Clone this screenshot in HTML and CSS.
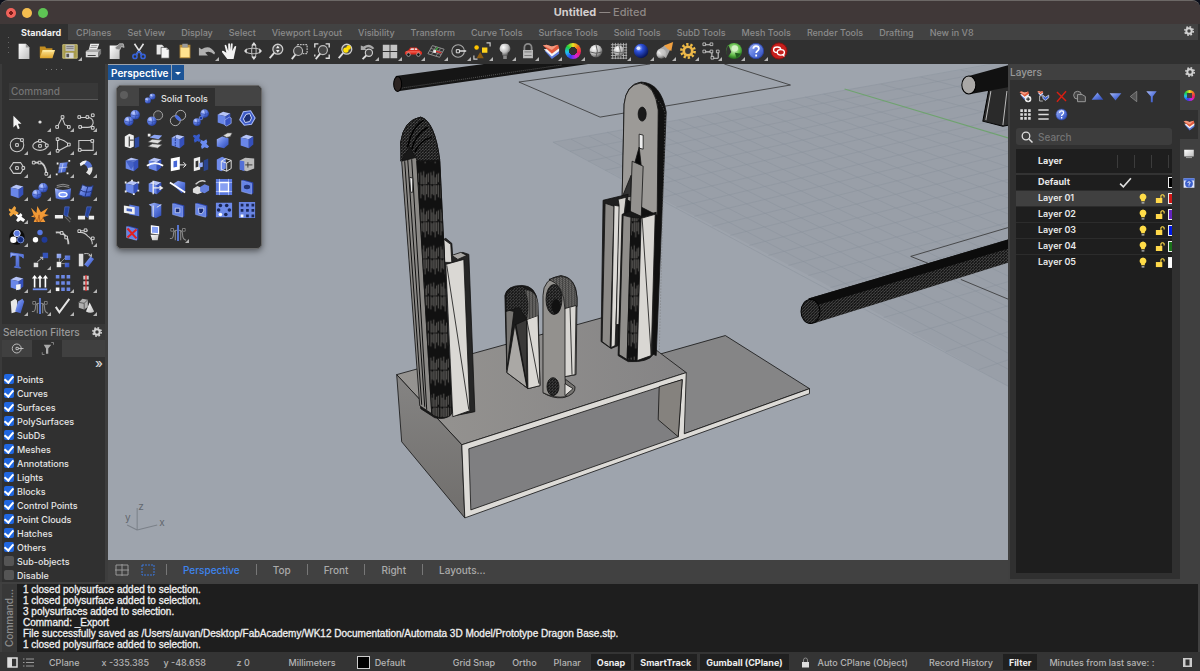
FILE: index.html
```html
<!DOCTYPE html>
<html lang="en">
<head>
<meta charset="utf-8">
<title>Untitled — Edited</title>
<link rel="stylesheet" href="styles.css">
</head>
<body>
<svg class="defs" aria-hidden="true">
  <defs>
    <linearGradient id="blue" x1="0" y1="0" x2="1" y2="1"><stop offset="0" stop-color="#a9baf5"/><stop offset=".5" stop-color="#5d7be0"/><stop offset="1" stop-color="#2c48b4"/></linearGradient>
    <radialGradient id="ball" cx=".35" cy=".3" r=".75"><stop offset="0" stop-color="#c5d2ff"/><stop offset=".5" stop-color="#5f7ee6"/><stop offset="1" stop-color="#203a9c"/></radialGradient>
    <radialGradient id="deep" cx=".35" cy=".3" r=".75"><stop offset="0" stop-color="#b8ccff"/><stop offset=".35" stop-color="#2d50d8"/><stop offset="1" stop-color="#04104e"/></radialGradient>
    <radialGradient id="grayball" cx=".35" cy=".3" r=".75"><stop offset="0" stop-color="#fff"/><stop offset=".6" stop-color="#bbb"/><stop offset="1" stop-color="#555"/></radialGradient>
    <radialGradient id="greenball" cx=".5" cy=".4" r=".6"><stop offset="0" stop-color="#e4f8d8"/><stop offset=".6" stop-color="#62bd4a"/><stop offset="1" stop-color="#1e641a"/></radialGradient>
    <linearGradient id="paper" x1="0" y1="0" x2="1" y2="1"><stop offset="0" stop-color="#fff"/><stop offset="1" stop-color="#bdbdbd"/></linearGradient>
    <linearGradient id="gold" x1="0" y1="0" x2="0" y2="1"><stop offset="0" stop-color="#ffe693"/><stop offset="1" stop-color="#e0a52a"/></linearGradient>
    <linearGradient id="face" x1="0" y1="0" x2="1" y2="0"><stop offset="0" stop-color="#969491"/><stop offset="1" stop-color="#858485"/></linearGradient>
    <linearGradient id="side" x1="0" y1="0" x2="0" y2="1"><stop offset="0" stop-color="#858483"/><stop offset="1" stop-color="#706e6c"/></linearGradient>
    <pattern id="mesh" width="10" height="37" patternUnits="userSpaceOnUse"><rect width="10" height="37" fill="#111"/><path d="M1 0v14M1 25v12M2.500 2v8M2.500 28v9M4 0v11M4 24v13M5.500 0v16M5.500 30v7M7 1v9M7 27v10M8.500 0v13M8.500 26v9" stroke="#8a8885" stroke-width=".6"/><path d="M0 0h10" stroke="#000"/></pattern>
    <pattern id="weave" width="3" height="3" patternUnits="userSpaceOnUse"><rect width="3" height="3" fill="#161616"/><path d="M0 3L3 0M0 0l1 1" stroke="#6c6c6c" stroke-width=".5"/></pattern>
    <pattern id="ridge" width="3" height="2" patternUnits="userSpaceOnUse"><rect width="3" height="2" fill="#b3b1ae"/><path d="M0 .5h2M1.500 1.500h2" stroke="#111" stroke-width=".9"/></pattern>
    <symbol id="cube" viewBox="0 0 20 20"><path d="M3 6l6-3 8 2-5 3z" fill="#b6c4f7"/><path d="M3 6l9 2v10l-9-3z" fill="#6a87e8"/><path d="M12 8l5-3v9l-5 4z" fill="#3550bb"/></symbol>
    <symbol id="slab" viewBox="0 0 20 20"><path d="M4 3l2-1 11 3v12l-2 1z" fill="#2c46ae"/><path d="M4 3l11 3v12L4 15z" fill="#6583e6" stroke="#9fb1f2" stroke-width=".6"/></symbol>
    <symbol id="sphere" viewBox="0 0 10 10"><circle cx="5" cy="5" r="4.800" fill="url(#ball)"/><path d="M.5 5q4.500 2 9 0M5 .3q2 4.700 0 9.400" fill="none" stroke="#2a429f" stroke-width=".6"/></symbol>
    <symbol id="glass" viewBox="0 0 20 20"><circle cx="12" cy="8" r="5.500" fill="#4a4a4a" stroke="#ccc" stroke-width="1.400"/><path d="M8 12l-5 6" stroke="#ddd" stroke-width="2"/></symbol>
    <symbol id="gear" viewBox="0 0 12 12"><circle cx="6" cy="6" r="2.700" fill="none" stroke="#d2d2d2" stroke-width="2"/><circle cx="6" cy="6" r="4.200" fill="none" stroke="#d2d2d2" stroke-width="1.600" stroke-dasharray="1.700 1.599"/></symbol>
    <symbol id="layers" viewBox="0 0 20 20"><path d="M3 10l8 9 8-6v-3z" fill="#5c79d8"/><path d="M2 8l9 8 8-6V7z" fill="#f4f4f4"/><path d="M1 4l4-1 6 2 7-2 1 4-8 6z" fill="#e0593d"/><path d="M1 4l4-1 6 2 7-2-7 6z" fill="#f39a80"/></symbol>
    <symbol id="help" viewBox="0 0 20 20"><circle cx="10" cy="10" r="8.500" fill="url(#blue)" stroke="#29419f"/><path d="M7 7.500q.2-3 3-3 3.200 0 3.200 2.800 0 1.700-1.700 2.700-1.300.8-1.300 2.300M10.200 14v2" fill="none" stroke="#fff" stroke-width="2"/></symbol>
    <symbol id="split" viewBox="0 0 20 20"><path d="M1 16q4 1 4-5 0-4 4-4M19 18q-4-1-4-7 0-4-4-4M7 7v11M13 7v11" fill="none" stroke="#888" stroke-width="1.200"/><path d="M10 1v18" stroke="#5c7de0" stroke-width="2"/><path d="M2 5h3v3H2zM15 5h3v3h-3z" fill="#222" stroke="#aaa" stroke-width=".7"/></symbol>
    <symbol id="bulb" viewBox="0 0 10 12"><path d="M5 .5a3.800 3.800 0 0 0-2 7V9h4V7.500a3.800 3.800 0 0 0-2-7z" fill="#ffdc48"/><path d="M3.500 10h3v1.500h-3z" fill="#bbb"/></symbol>
    <symbol id="unlock" viewBox="0 0 10 12"><path d="M6 6V3a2 2 0 0 1 3.500 0v2" fill="none" stroke="#ffdc48" stroke-width="1.200"/><path d="M.5 5.500h7V11h-7z" fill="#ffd84a"/></symbol>
  </defs>
</svg>

<div class="window">
  <header class="titlebar">
    <div class="lights"><button class="light close" aria-label="Close"></button><button class="light mini" aria-label="Minimize"></button><button class="light full" aria-label="Zoom"></button></div>
    <h1 class="doc"><b>Untitled</b> — <span>Edited</span></h1>
  </header>

  <div class="ribbon">
    <span class="grip-v" aria-hidden="true"></span>
    <nav class="tabs">
      <button class="tab on">Standard</button><button class="tab">CPlanes</button><button class="tab">Set View</button><button class="tab">Display</button><button class="tab">Select</button><button class="tab">Viewport Layout</button><button class="tab">Visibility</button><button class="tab">Transform</button><button class="tab">Curve Tools</button><button class="tab">Surface Tools</button><button class="tab">Solid Tools</button><button class="tab">SubD Tools</button><button class="tab">Mesh Tools</button><button class="tab">Render Tools</button><button class="tab">Drafting</button><button class="tab">New in V8</button>
      <button class="gear" aria-label="Toolbar options"><svg><use href="#gear"/></svg></button>
    </nav>
    <div class="toolbar">
      <button class="tool" aria-label="New"><svg viewBox="0 0 20 20"><path d="M4 2h8l4 4v13H4z" fill="url(#paper)"/><path d="M12 2v4h4z" fill="#999"/></svg></button>
      <button class="tool" aria-label="Open"><svg viewBox="0 0 20 20"><path d="M2 5h6l1 2h7v10H2z" fill="#c48e20"/><path d="M5 9h14l-3 9H2z" fill="url(#gold)"/><path d="M6 10h11" stroke="#fff3b8"/></svg></button>
      <button class="tool fly" aria-label="Save"><svg viewBox="0 0 20 20"><path d="M2 3h16v15H2z" fill="#a69a4c"/><path d="M2 3h16v15H2z" fill="none" stroke="#d1c67d"/><path d="M5 3h10v7H5z" fill="#bcbcbc"/><path d="M6 5h8M6 7h8" stroke="#777"/><path d="M5 12h9v6H5z" fill="#d8d8d8"/><path d="M6 13h3v4H6z" fill="#555"/></svg></button>
      <button class="tool" aria-label="Print"><svg viewBox="0 0 20 20"><path d="M7 2h10l-3 8H5z" fill="#eee"/><path d="M8 4h7M7 6h7" stroke="#888"/><path d="M2 10l4-2h13l-3 4H2z" fill="#aaa"/><path d="M2 11h14v6H2z" fill="#d9d9d9"/><path d="M16 11l3-3v5l-3 4z" fill="#777"/><path d="M4 15h9" stroke="#333"/></svg></button>
      <button class="tool" aria-label="Document properties"><svg viewBox="0 0 20 20"><path d="M3 4h11v15H3z" fill="url(#paper)"/><path d="M9 6l5-4h4l1 4-3-1-2 4-4-1z" fill="#888" stroke="#ddd" stroke-width=".7"/></svg></button>
      <button class="tool" aria-label="Cut"><svg viewBox="0 0 20 20"><path d="M5 2l8 12M15 2L7 14" stroke="#e4e4e4" stroke-width="1.800"/><circle cx="5.500" cy="16" r="2.300" fill="none" stroke="#3460d8" stroke-width="1.800"/><circle cx="14.500" cy="16" r="2.300" fill="none" stroke="#3460d8" stroke-width="1.800"/><path d="M10 10l-3 4M10 10l3 4" stroke="#3460d8" stroke-width="1.800"/></svg></button>
      <button class="tool" aria-label="Copy"><svg viewBox="0 0 20 20"><path d="M4 3h6l2 2v9H4z" fill="#e6e6e6"/><path d="M9 6h6l3 3v9H9z" fill="#f4f4f4" stroke="#333" stroke-width=".7"/><path d="M15 6v3h3z" fill="#999"/></svg></button>
      <button class="tool" aria-label="Paste"><svg viewBox="0 0 20 20"><path d="M4 3h12v15H4z" fill="#b48a3a"/><path d="M5 6h10v11H5z" fill="#ffe28e"/><path d="M7 2h6v4H7z" fill="#999"/></svg></button>
      <button class="tool fly" aria-label="Undo"><svg viewBox="0 0 20 20"><path d="M1 6l3 2q9-6 15 4l-1 2q-5-5-10-2l3 3H1z" fill="#b0b0b0"/></svg></button>
      <button class="tool" aria-label="Pan"><svg viewBox="0 0 20 20"><path d="M7 19l-6-8q0-2 2-1l3 2-2-8q1-2 2 0l2 6V2q1-1.500 2 0v7l1-7q1-1 2 0l-.5 8L15 5q1-1 2 0l-2 9-1 5z" fill="#f2f2f2"/></svg></button>
      <button class="tool" aria-label="Rotate view"><svg viewBox="0 0 20 20"><ellipse cx="10" cy="10" rx="8" ry="3" fill="none" stroke="#bbb" stroke-width="1.200"/><ellipse cx="11" cy="10" rx="2.500" ry="7.500" fill="none" stroke="#bbb" stroke-width="1.200"/><path d="M11 0l3 4H8zM11 20l3-4H8zM0 10l3-3v6zM20 10l-3-3v6z" fill="#ddd"/></svg></button>
      <button class="tool" aria-label="Zoom dynamic"><svg viewBox="0 0 20 20"><use href="#glass"/><path d="M12 4l2 3h-4zM12 12l2-3h-4z" fill="#eee"/></svg></button>
      <button class="tool" aria-label="Zoom window"><svg viewBox="0 0 20 20"><path d="M8 3h11v10H8z" fill="none" stroke="#eee" stroke-dasharray="2 1"/><circle cx="9" cy="10" r="5" fill="#444" stroke="#bbb" stroke-width="1.300"/><path d="M6 14l-4 5" stroke="#ddd" stroke-width="2"/></svg></button>
      <button class="tool" aria-label="Zoom extents"><svg viewBox="0 0 20 20"><path d="M2 6V2h4M14 2h4v4M18 14v4h-4M2 14v2" fill="none" stroke="#ddd" stroke-width="1.500"/><circle cx="11" cy="9" r="5" fill="#444" stroke="#bbb" stroke-width="1.300"/><path d="M8 13l-5 6" stroke="#ddd" stroke-width="2"/></svg></button>
      <button class="tool" aria-label="Zoom selected"><svg viewBox="0 0 20 20"><use href="#glass"/><circle cx="14" cy="6" r="2.500" fill="#ffd900"/><circle cx="11" cy="9" r="3" fill="#ffe10a"/></svg></button>
      <button class="tool fly" aria-label="Undo view"><svg viewBox="0 0 20 20"><path d="M5 5q7-5 12 2l-2 1q-4-4-8-1l1 2H2V4z" fill="#aaa"/><circle cx="11" cy="12" r="4" fill="#444" stroke="#ccc" stroke-width="1.300"/><path d="M8 15l-4 4" stroke="#ddd" stroke-width="2"/></svg></button>
      <button class="tool fly" aria-label="Four viewports"><svg viewBox="0 0 20 20"><path d="M2 3h7.500v7H2zM10.500 3H18v7h-7.500zM2 11h7.500v7H2zM10.500 11H18v7h-7.500z" fill="#c4c4c4"/></svg></button>
      <button class="tool fly" aria-label="Named views"><svg viewBox="0 0 20 20"><path d="M1 11l4-2 2-3h7l3 3 3 2v3H1z" fill="#d92c20"/><path d="M7 8l1-1h3v2H7zM12 7h2l1 2h-3z" fill="#e6d6d6"/><path d="M2 11h16" stroke="#ff8170"/><circle cx="5" cy="14" r="2" fill="#151515" stroke="#ccc" stroke-width=".7"/><circle cx="16" cy="14" r="2" fill="#151515" stroke="#ccc" stroke-width=".7"/></svg></button>
      <button class="tool fly" aria-label="Set CPlane"><svg viewBox="0 0 20 20"><path d="M6 4l13 4-5 9L1 13z" fill="none" stroke="#999"/><path d="M4 7l13 4M3 10l13 4M10 5L5 14M15 7l-5 9" stroke="#888"/><path d="M9 10l7 2" stroke="#d33" stroke-width="1.500"/><path d="M9 10l3-4" stroke="#4a4" stroke-width="1.500"/><rect x="7" y="9" width="3" height="3" fill="#eee"/></svg></button>
      <button class="tool fly" aria-label="Object snap"><svg viewBox="0 0 20 20"><circle cx="9" cy="10" r="7" fill="none" stroke="#aaa" stroke-width="1.200"/><path d="M10 10h8" stroke="#ddd" stroke-width="1.400"/><path d="M7 8.500h3.500v3.500H7z" fill="#333" stroke="#eee"/></svg></button>
      <button class="tool fly" aria-label="Select"><svg viewBox="0 0 20 20"><circle cx="4" cy="6" r="2.500" fill="#ffc400"/><path d="M10 6h6v6h-6z" fill="#ffd21c"/><path d="M8 11l4 7H4z" fill="#8c5b11"/><path d="M15 1h4v4M1 15v4h4" fill="none" stroke="#ccc" stroke-width="1.300"/></svg></button>
      <button class="tool fly" aria-label="Hide"><svg viewBox="0 0 20 20"><path d="M10 2a5.300 5.300 0 0 0-3 10v3h6v-3a5.300 5.300 0 0 0-3-10z" fill="url(#grayball)"/><path d="M8 15h4v4H8z" fill="#888"/></svg></button>
      <button class="tool fly" aria-label="Lock"><svg viewBox="0 0 20 20"><path d="M6 10V6a4 4 0 0 1 8 0v4" fill="none" stroke="#8a8a8a" stroke-width="2"/><path d="M4.500 9h11v9h-11z" fill="#bcbcbc"/><path d="M6 11h8M6 15h8" stroke="#777"/></svg></button>
      <button class="tool fly" aria-label="Layers"><svg><use href="#layers"/></svg></button>
      <button class="tool fly" aria-label="Properties"><span class="wheel"></span></button>
      <button class="tool" aria-label="Shade"><svg viewBox="0 0 20 20"><circle cx="10" cy="10" r="7" fill="url(#grayball)"/><path d="M3 11q7 3 14 0M10 3q3 7 0 14" fill="none" stroke="#555"/></svg></button>
      <button class="tool fly" aria-label="Wireframe"><svg viewBox="0 0 20 20"><path d="M1 3h18M1 6h18M1 9h18M1 12h18M1 15h18M1 18h18M3 1v18M6 1v18M9 1v18M12 1v18M15 1v18M18 1v18" stroke="#bbb" stroke-width=".9"/><circle cx="10" cy="10" r="6" fill="url(#grayball)"/><path d="M4 11q6 2 12 0M10 4q3 6 0 12" fill="none" stroke="#666"/></svg></button>
      <button class="tool fly" aria-label="Render"><svg viewBox="0 0 20 20"><circle cx="9" cy="10" r="8" fill="url(#deep)"/><circle cx="6" cy="7" r="2" fill="#e2eaff"/></svg></button>
      <button class="tool fly" aria-label="Spotlight"><svg viewBox="0 0 20 20"><circle cx="6" cy="13" r="5.500" fill="url(#grayball)"/><path d="M2 9l9-6 5 5-5 10z" fill="#c4c4c4" opacity=".8"/><path d="M9 4l10-4-2 10q-4-1-8-6z" fill="#f0a040"/></svg></button>
      <button class="tool fly" aria-label="Options"><svg viewBox="0 0 20 20"><circle cx="10" cy="10" r="7.300" fill="none" stroke="#eebb45" stroke-width="3" stroke-dasharray="2.500 2.100"/><circle cx="10" cy="10" r="4.700" fill="#393939" stroke="#edb84a" stroke-width="3"/></svg></button>
      <button class="tool fly" aria-label="Dimension"><svg viewBox="0 0 20 20"><path d="M3 3h8M3 11h8v7h7M18 11v7" fill="none" stroke="#ccc" stroke-width="1.200"/><path d="M1 1h3v3H1zM9 1h3v3H9zM1 9h3v3H1zM9 9h3v3H9zM16 9h3v3h-3zM10 16h3v3h-3z" fill="#333" stroke="#ddd" stroke-width=".8"/></svg></button>
      <button class="tool fly" aria-label="Grasshopper"><svg viewBox="0 0 20 20"><circle cx="10" cy="10" r="9" fill="url(#greenball)"/><path d="M7 11L3 17Q-1 9 4 4z" fill="#333"/><path d="M11 12l7 1-5 5z" fill="#225d20"/><circle cx="11" cy="7" r="3.500" fill="#d3f2c4"/></svg></button>
      <button class="tool fly" aria-label="Help"><svg><use href="#help"/></svg></button>
      <button class="tool" aria-label="Feedback"><svg viewBox="0 0 20 20"><circle cx="10" cy="10" r="9" fill="#c71f1c" stroke="#8d100f"/><ellipse cx="8" cy="8.500" rx="4" ry="3" fill="none" stroke="#fff" stroke-width="1.500"/><ellipse cx="12" cy="11.500" rx="4" ry="3" fill="#c71f1c" stroke="#fff" stroke-width="1.500"/><path d="M13 14l3 3v-4" fill="#fff"/></svg></button>
    </div>
  </div>

  <div class="work">
    <aside class="left">
      <span class="grip-h" aria-hidden="true"></span>
      <input class="command" type="text" placeholder="Command" aria-label="Command">
      <div class="tools">
        <button class="tool" aria-label="Pointer"><svg viewBox="0 0 20 20"><path d="M6 3v13l3-3 2 5 2-1-2-5h4z" fill="#f4f4f4"/></svg></button>
        <button class="tool fly" aria-label="Point"><svg viewBox="0 0 20 20"><circle cx="10" cy="10" r="1.800" fill="#ddd"/></svg></button>
        <button class="tool fly" aria-label="Polyline"><svg class="wire" viewBox="0 0 20 20"><path d="M3 17L9 5l3 8 5 2"/><path class="n" d="M2 14h3v3H2zM8 3h3v3H8zM15 14h3v3h-3z"/></svg></button>
        <button class="tool fly" aria-label="Curve"><svg class="wire" viewBox="0 0 20 20"><path d="M3 5h8q7 0 7 6-1 5-6 5H4"/><path class="n" d="M1 3h3v3H1zM10 3h3v3h-3zM16 1h3v3h-3zM2 14h3v3H2zM16 15h3v3h-3z"/></svg></button>
        <button class="tool fly" aria-label="Circle"><svg class="wire" viewBox="0 0 20 20"><circle cx="10" cy="10" r="7.500"/><path class="n" d="M8.500 8.500h3v3h-3zM14 3h3v3h-3z"/></svg></button>
        <button class="tool fly" aria-label="Ellipse"><svg class="wire" viewBox="0 0 20 20"><ellipse cx="10" cy="11" rx="8" ry="5"/><path class="n" d="M8.500 9.500h3v3h-3zM8.500 4h3v3h-3zM16 9h3v3h-3z"/></svg></button>
        <button class="tool fly" aria-label="Arc"><svg class="wire" viewBox="0 0 20 20"><path d="M4 3v14l13-7Q12 4 4 3z"/><path class="n" d="M2.500 2h3v3h-3zM2.500 15h3v3h-3zM15 8h3v3h-3z"/></svg></button>
        <button class="tool fly" aria-label="Rectangle"><svg class="wire" viewBox="0 0 20 20"><path d="M2 5h16v11H2z"/><path class="n" d="M15.500 4h3v3h-3zM1.500 14h3v3h-3z"/></svg></button>
        <button class="tool fly" aria-label="Polygon"><svg class="wire" viewBox="0 0 20 20"><path d="M6 4h8l4 6-4 6H6l-4-6z"/><path class="n" d="M8.500 8.500h3v3h-3zM15.500 8.500h3v3h-3z"/></svg></button>
        <button class="tool fly" aria-label="Fillet"><svg class="wire" viewBox="0 0 20 20"><path d="M3 4h7q6 1 7 12" stroke-width="2"/><path class="n" d="M1.500 2.500h3v3h-3zM8 2.500h3v3H8zM15.500 15h3v3h-3z"/></svg></button>
        <button class="tool fly" aria-label="Surface"><svg viewBox="0 0 20 20"><path d="M6 4l10-1-3 12-9 1z" fill="url(#blue)" stroke="#333"/><path d="M10 5l-2 10M5 10l10-1" stroke="#dce4ff" stroke-width=".7"/><path d="M3 4h2v2H3zM16 1h2v2h-2zM2 16h2v2H2zM14 15h2v2h-2z" fill="#eee"/></svg></button>
        <button class="tool fly" aria-label="Sweep"><svg viewBox="0 0 20 20"><path d="M3 5q4-4 8-3l1 3q-5 0-8 3z" fill="#f1f1f1"/><path d="M11 2q4 1 6 6l-5 3q-1-4-4-5z" fill="#5874d4"/><path d="M17 9q1 5-3 9l-4-3q3-3 2-5z" fill="#e4e4e4"/></svg></button>
        <button class="tool fly" aria-label="Box"><svg><use href="#cube"/></svg></button>
        <button class="tool fly" aria-label="Sphere"><svg viewBox="0 0 20 20"><use href="#sphere" x="8" y="1" width="11" height="11"/><use href="#sphere" x="1" y="8" width="11" height="11"/></svg></button>
        <button class="tool fly" aria-label="Pipe"><svg viewBox="0 0 20 20"><path d="M3 4q7-3 14 0M3 6q7-3 14 0" fill="none" stroke="#999"/><path d="M1 7q9 4 18 0l-1 11q-8 3-16 0z" fill="url(#blue)"/><ellipse cx="10" cy="14" rx="4.500" ry="2.500" fill="#83a0ff" stroke="#fff" stroke-width="1.500"/></svg></button>
        <button class="tool fly" aria-label="Patch"><svg viewBox="0 0 20 20"><path d="M6 3q7 4 12 1l-3 12q-7 2-13-2z" fill="url(#blue)" stroke="#223577"/><path d="M12 5l-3 11M4 9q6 4 13 1" fill="none" stroke="#1e2f78"/></svg></button>
        <button class="tool fly" aria-label="Boolean puzzle"><svg viewBox="0 0 20 20"><path d="M1 4l3 1 3-4 2 2-1 3 4 3-3 3-3-2-3 3-2-3 2-2-2-2z" fill="#f0a43d"/><path d="M9 10l3 1 2-2 2 2-1 2 4 3-2 3-3-2-3 2-2-2 2-3-2-2z" fill="#fff"/></svg></button>
        <button class="tool" aria-label="Explode"><svg viewBox="0 0 20 20"><path d="M0 3l6 6 1-8 4 7 8-5-4 7 5 1-7 3 3 5H3l2-5-5-1 3-2z" fill="#f29a36"/><path d="M3 11l4 8 2-8 1 8 5-7" stroke="#a3541a" fill="none" stroke-width=".8"/></svg></button>
        <button class="tool" aria-label="Trim"><svg viewBox="0 0 20 20"><path d="M1 11h9v4H1z" fill="#eee"/><path d="M12 13l6 6M14 11l5 5" fill="none" stroke="#666" stroke-width="1.300"/><path d="M17 2h-5l-1 9 4 2z" fill="#24439f" stroke="#5875ce" stroke-width=".6"/></svg></button>
        <button class="tool" aria-label="Split"><svg viewBox="0 0 20 20"><path d="M1 12h8v4H1zM13 12h6v4h-6z" fill="#eee"/><path d="M16 2h-5l-2 10 3 2z" fill="#24439f" stroke="#5875ce" stroke-width=".6"/></svg></button>
        <button class="tool fly" aria-label="Group"><svg viewBox="0 0 20 20"><circle cx="10" cy="10" r="8.500" fill="#0c0c0c"/><circle cx="10" cy="6" r="3.600" fill="#5878e2" stroke="#dce3ff"/><circle cx="6" cy="13" r="3.600" fill="#fff"/><circle cx="14" cy="13" r="3.600" fill="#152c7c" stroke="#8197db"/></svg></button>
        <button class="tool" aria-label="Ungroup"><svg viewBox="0 0 20 20"><circle cx="10" cy="5" r="3" fill="#5878e2"/><circle cx="5" cy="13" r="3" fill="#fff"/><circle cx="15" cy="13" r="3.300" fill="#203a96"/></svg></button>
        <button class="tool" aria-label="Join curves"><svg class="wire" viewBox="0 0 20 20"><path d="M2 5q7-1 11 4 3 3 3 9" stroke-width="2"/><path class="n" d="M7 4h3v3H7zM12 9h3v3h-3z"/></svg></button>
        <button class="tool fly" aria-label="Adjust curves"><svg class="wire" viewBox="0 0 20 20"><path d="M2 5q6-1 10 4 5 3 5 9M4 3h8"/><path class="n" d="M1 2h3v3H1zM8 1h3v3H8zM16 10h3v3h-3z"/></svg></button>
        <button class="tool" aria-label="Text"><svg viewBox="0 0 20 20"><path d="M3 2l14 2v4l-2-2-3-1v12l2 2-7-1 2-2V5L5 5 3 7z" fill="url(#blue)" stroke="#5d7be0"/></svg></button>
        <button class="tool fly" aria-label="Move"><svg viewBox="0 0 20 20"><path d="M13 2h6v6h-6z" fill="#3553b9"/><path d="M3 13h5v5H3z" fill="#ddd"/><path d="M7 12l6-5M10 7h3v3" stroke="#ccc" fill="none"/></svg></button>
        <button class="tool" aria-label="Copy object"><svg viewBox="0 0 20 20"><path d="M3 3h5v5H3zM12 5h6v5h-6zM12 13h5v5h-5z" fill="url(#blue)"/><path d="M3 12h5v6H3z" fill="#eee"/><path d="M8 12l4-4M8 14h4M6 12V8" stroke="#999"/></svg></button>
        <button class="tool" aria-label="Rotate"><svg viewBox="0 0 20 20"><path d="M2 3h5v14H2z" fill="#ddd"/><path d="M15 6l4 3-7 9-4-3z" fill="url(#blue)"/><path d="M8 3q6-1 8 3M13 5l3 1V3" stroke="#ccc" fill="none"/></svg></button>
        <button class="tool fly" aria-label="Scale"><svg viewBox="0 0 20 20"><use href="#cube"/><path d="M9 12l5-1v6l-5 1z" fill="#f5f5f5"/></svg></button>
        <button class="tool fly" aria-label="Align"><svg viewBox="0 0 20 20"><path d="M4 4v11M10 4v11M16 4v11" stroke="#fff" stroke-width="1.800"/><path d="M4 1l3 4H1zM10 1l3 4H7zM16 1l3 4h-6z" fill="#fff"/><path d="M2 17h16" stroke="#6f8eed" stroke-width="2"/></svg></button>
        <button class="tool fly" aria-label="Array"><svg viewBox="0 0 20 20"><path d="M2 1h4v4H2zM8 1h4v4H8zM14 1h4v4h-4zM2 8h4v4H2zM8 8h4v4H8zM14 8h4v4h-4zM8 15h4v4H8zM14 15h4v4h-4z" fill="#6c88e4"/><path d="M2 15h4v4H2z" fill="#fff"/></svg></button>
        <button class="tool fly" aria-label="Set points"><svg viewBox="0 0 20 20"><path d="M7 2h6v4H7zM7 14h6v4H7zM7 8h6v4H7z" fill="#ccc"/><path d="M10 1v18" stroke="#d62828" stroke-width="1.500"/></svg></button>
        <button class="tool fly" aria-label="Bend"><svg viewBox="0 0 20 20"><path d="M3 5l5-3 2 2v12l-6 2z" fill="#e8e8e8"/><path d="M11 5l5-3 2 3-4 13-6-2z" fill="url(#blue)"/></svg></button>
        <button class="tool fly" aria-label="Symmetry"><svg><use href="#split"/></svg></button>
        <button class="tool fly" aria-label="Check"><svg viewBox="0 0 20 20"><path d="M2 11l4 6L17 2" fill="none" stroke="#e5e5e5" stroke-width="2.200"/></svg></button>
        <button class="tool fly" aria-label="Primitives"><svg viewBox="0 0 20 20"><path d="M2 6l4-4 6 1v8l-4 3-6-2z" fill="#b0b0b0"/><path d="M2 6l6 1 4-4M8 7v7" stroke="#555" fill="none"/><path d="M14 6l5 10q-4 3-9 0z" fill="url(#paper)"/></svg></button>
      </div>

      <section class="filters">
        <div class="panel-title"><h2>Selection Filters</h2><button class="gear" aria-label="Filter options"><svg><use href="#gear"/></svg></button></div>
        <div class="minitabs">
          <button aria-label="Osnap"><svg class="wire" viewBox="0 0 20 20"><circle cx="9" cy="10" r="6"/><path d="M11 10h7"/><path class="n" d="M8 8.500h3v3H8z"/></svg></button>
          <button class="on" aria-label="Filters"><svg viewBox="0 0 20 20"><path d="M5 5h10l-4 5v7H8v-7z" fill="#aaa"/><path d="M15 2h3v3M3 15v3h3" stroke="#999" fill="none"/></svg></button>
        </div>
        <button class="more" aria-label="More">»</button>
        <div class="checks">
          <label><input type="checkbox" checked>Points</label>
          <label><input type="checkbox" checked>Curves</label>
          <label><input type="checkbox" checked>Surfaces</label>
          <label><input type="checkbox" checked>PolySurfaces</label>
          <label><input type="checkbox" checked>SubDs</label>
          <label><input type="checkbox" checked>Meshes</label>
          <label><input type="checkbox" checked>Annotations</label>
          <label><input type="checkbox" checked>Lights</label>
          <label><input type="checkbox" checked>Blocks</label>
          <label><input type="checkbox" checked>Control Points</label>
          <label><input type="checkbox" checked>Point Clouds</label>
          <label><input type="checkbox" checked>Hatches</label>
          <label><input type="checkbox" checked>Others</label>
          <label><input type="checkbox">Sub-objects</label>
          <label><input type="checkbox">Disable</label>
        </div>
      </section>
    </aside>

    <main class="center">
      <div class="viewport">
        <svg class="scene" viewBox="108 65 900 495" preserveAspectRatio="xMidYMid slice" role="img" aria-label="Perspective view of the model">
          <path d="M553 143L845 91 1008 63V387L820 282z" fill="#999fa8"/>
          <path class="grid" d="M553 143L1008 387M571 140L1008 370M589 137L1008 354M607 133L1008 339M625 130L1008 323M643 127L1008 308M661 124L1008 292M679 121L1008 277M697 117L1008 261M715 114L1008 246M733 111L1008 230M751 108L1008 215M769 105L1008 199M787 101L1008 184M805 98L1008 168M823 95L1008 153M880 85L1008 120M920 78L1008 101M960 71L1008 82"/>
          <path class="grid" d="M553 143L1008 62M570 152L1008 69M588 162L1008 77M605 171L1008 86M623 180L1008 96M640 189L1008 107M658 199L1008 118M676 208L1008 130M694 217L1008 142M712 227L1008 154M730 236L1008 167M749 246L1008 180M768 256L1008 194M788 266L1008 208M808 276L1008 223M830 288L1008 240M856 302L1008 258M883 318L1008 282M912 334L1008 306M945 352L1008 332M978 370L1008 360"/>
          <path d="M844 90l164 49" stroke="#6fa36f" fill="none"/>
          <path class="thin" d="M650 65L519 83l81 35 190-32-66-21M1008 228l-98 29 20 8M960 280l48 20"/>
          <path d="M396 77l88-12h104L400 92z" fill="#151515"/><path d="M402 89l160-23" stroke="#555" stroke-dasharray="1 1"/><ellipse cx="398" cy="85" rx="4" ry="7.500" fill="#2c2422" stroke="#000"/>
          <path d="M808 299l200-59v23L813 324z" fill="url(#weave)"/><path d="M808 299l200-59v9L812 307z" fill="#0c0c0c"/><ellipse cx="810" cy="312" rx="9.500" ry="12" fill="url(#weave)" stroke="#000"/>
          <path d="M988 90l-6 32 20 5 6-1V84z" fill="#2a2a2a" stroke="#000"/><path d="M990 92l-5 29M1006 92l-4 34" stroke="#bbb"/><path d="M968 77l40-11v22l-38 7z" fill="#111"/><ellipse cx="968" cy="86" rx="7" ry="9" fill="#aaa8a6" stroke="#000"/>

          <g class="edge">
            <path d="M658 355l67-19 84 53-125 45z" fill="#858586"/>
            <path d="M397 375l213-59 76 57-224 72z" fill="url(#face)"/>
            <path d="M397 375l65 70 3 73-63-76z" fill="url(#side)"/>
            <path d="M462 445l224-72-2 61 125-45v5L465 518z" fill="#dddbd7"/>
            <path d="M469 449l213-69-4 57-207 73z" fill="#7f7f81"/>
            <path d="M659 387l23-7-4 57-20-17z" fill="#85827e"/>
          </g>

          <g class="edge">
            <path d="M624 105q2-20 17-22 20 1 25 30l-4 95-6 148-22-10-12-145z" fill="#111"/>
            <path d="M624 105q2-19 16-21 15 2 18 27l-1 105-35-18z" fill="#9c9a97"/>
            <path d="M656 100q6 5 9 14l-6 240" stroke="#777" stroke-dasharray="1 2" fill="none"/>
            <ellipse cx="642" cy="115" rx="4" ry="7" fill="#1a1a1a"/>
            <path d="M639 135l4 1v14l-4-1z" fill="#eee"/>
            <path d="M639 148l-5 18 7 0z" fill="#080808"/>
            <path d="M631 176l-9 22 9-1z" fill="#333"/>
            <path d="M632 162l11 5-2 53-11-2z" fill="#93918e"/>
            <path d="M603 201l25-6-3 22-7 129-7 3-10-7z" fill="#1f1f1f"/>
            <path d="M605 204l9 3-4 141-8-6z" fill="#8c8a87"/>
            <path d="M614 206l6 1-5 139-4 2z" fill="#dcdad6"/>
            <path d="M618 200l8-2-2 17-5 110-3 0 3-119z" fill="#d4d2ce"/>
            <path d="M622 215l8-3 11 5 15-4-3 142q-5 8-25 7l-10-6z" fill="#191919"/>
            <path d="M623 216l8 2-4 142-8-5z" fill="#8f8d8a"/>
            <path d="M631 218l10 1-4 142-10-1z" fill="url(#mesh)"/>
            <path d="M641 219l14-4-4 141-14 5z" fill="#d9d7d3"/>
            <path d="M642 219l9 137"/>
          </g>

          <g class="edge">
            <path d="M444 240l2-1 6 5 1 14 10-5 6 2 6 157-20 4z" fill="#262626"/>
            <path d="M444 240l7 5 1 18h-7z" fill="#d7d5d1"/>
            <path d="M452 256l9-3 6 3-9 4z" fill="#a9a7a4"/>
            <path d="M446 265l18-5 6 151-17 6z" fill="#dad8d4"/>
            <path d="M447 266l22 144"/>
            <path d="M401 143q3-22 20-25 14 4 19 43l12 252q-5 8-17 5l-14-9z" fill="#191919"/>
            <path d="M402 162l15-4 15 256-12-8z" fill="#8b8986"/>
            <path d="M405 162l17 243M408 160l17 247M412 160l15 250" stroke-width="1"/>
            <path d="M401 143q3-22 20-25 14 4 19 43l-22 1-8-14-9 14z" fill="url(#weave)"/>
            <path d="M408 148q4-20 16-27M412 150q4-15 16-22M415 153q6-12 17-15" fill="none" stroke="#000" stroke-width="1.500"/>
            <path d="M417 162h23l12 251q-1 5-9 5t-11-4z" fill="url(#mesh)"/>
            <path d="M410 178l3 1v14h-2z" fill="#eee"/>
          </g>

          <g class="edge">
            <path d="M505 296q2-10 17-10 14 0 16 18l2 82-12 3-21-16z" fill="#1a1a1a"/>
            <path d="M506 310l8 2-7 58z" fill="#777572"/>
            <path d="M515 325l-8 48 20 15z" fill="#aaa8a5"/>
            <path d="M516 325l11 60V320z" fill="#3a3938"/>
            <path d="M527 320l11-4 2 70-12 3z" fill="#dad8d4"/><path d="M527 321l12 63"/>
            <path d="M506 296q3-9 16-9 9 2 12 16l-7 17-8-12-13 4z" fill="url(#weave)"/>
            <path d="M529 291q8 3 9 13v12l-11 4q4-18-2-29z" fill="url(#ridge)" stroke="none"/>
          </g>
          <g class="edge">
            <path d="M566 380l9 7q1 8-12 11-11 1-20-5z" fill="#757370"/>
            <path d="M543 296q0-17 18-20 15 2 16 22l-1 77-11 2 1 20q-12 2-23-4z" fill="#93918e"/>
            <path d="M549 280q26-11 28 19v8l-12 3q-1-25-16-30z" fill="url(#ridge)"/>
            <path d="M565 309l11-3-1 69-10 2z" fill="#d8d6d2"/><path d="M570 308l2 67"/>
            <ellipse cx="554" cy="300" rx="8" ry="15" fill="url(#weave)"/>
            <ellipse cx="556" cy="307" rx="4" ry="7" fill="#111"/>
            <ellipse cx="553" cy="387" rx="6" ry="9" fill="url(#weave)"/>
            <path d="M565 384l8 5-8 7z" fill="#e0deda"/>
          </g>
          <g class="axis"><path d="M138 530v-22M138 530l20-5M138 530l-10-5"/><text x="139" y="510">z</text><text x="126" y="521">y</text><text x="160" y="526">x</text></g>
        </svg>

        <div class="vtitle"><button>Perspective</button><button class="drop" aria-label="View menu"><svg viewBox="0 0 10 10"><path d="M2 4h6L5 7z" fill="#fff"/></svg></button></div>

        <section class="palette">
          <header><button class="dot" aria-label="Close palette"></button><h2><svg viewBox="0 0 20 20"><use href="#sphere" x="8" y="2" width="10" height="10"/><use href="#sphere" x="1" y="8" width="10" height="10"/></svg>Solid Tools</h2></header>
          <div class="solids">
            <button class="tool" aria-label="Boolean union"><svg viewBox="0 0 20 20"><use href="#sphere" x="8" y="1" width="11" height="11"/><use href="#sphere" x="1" y="8" width="11" height="11"/></svg></button>
            <button class="tool" aria-label="Boolean difference"><svg viewBox="0 0 20 20"><circle cx="13.500" cy="7" r="5" fill="#3b3b3b" stroke="#aaa"/><use href="#sphere" x="1" y="8" width="11" height="11"/></svg></button>
            <button class="tool" aria-label="Boolean intersection"><svg viewBox="0 0 20 20"><g fill="none" stroke="#bbb"><circle cx="13" cy="7" r="5.500"/><circle cx="7" cy="13" r="5.500"/></g><ellipse cx="10" cy="10" rx="2" ry="4" transform="rotate(-45 10 10)" fill="#4b6de0"/></svg></button>
            <button class="tool" aria-label="Boolean split"><svg viewBox="0 0 20 20"><use href="#sphere" x="9" y="0" width="10" height="10"/><use href="#sphere" x="1" y="10" width="9" height="9"/><circle cx="10" cy="10" r="2" fill="#1c3cb0" stroke="#9ab0ff" stroke-width=".6"/></svg></button>
            <button class="tool" aria-label="Two objects"><svg viewBox="0 0 20 20"><use href="#cube"/><path d="M11 12l5-3 2 1v6l-5 3-2-1z" fill="#3854c4" stroke="#b4c2f8" stroke-width=".7"/></svg></button>
            <button class="tool" aria-label="Shell"><svg viewBox="0 0 20 20"><path d="M2 12l4-9 8-1 5 8-4 7-8 1z" fill="#3c5ac8" stroke="#a7b9f8" stroke-width="1.200"/><path d="M6 11l3-5 4-1 2 5-2 4-5 1z" fill="#1c2e70" stroke="#dce4ff"/></svg></button>
            <button class="tool" aria-label="Extract"><svg viewBox="0 0 20 20"><path d="M2 5l5-3 5 2v12l-4 2-6-2z" fill="#eee"/><path d="M7 5v11M7 9h5" stroke="#555" stroke-width="1.500"/><path d="M13 7l5-2v11l-5 2z" fill="#2c489f"/></svg></button>
            <button class="tool" aria-label="Extrude"><svg viewBox="0 0 20 20"><path d="M4 6l5-3 9 1-4 4z" fill="#8aa3f3"/><path d="M2 11l5-3 11 1-5 4zM2 16l5-3 11 1-5 4z" fill="#ddd" stroke="#444" stroke-width=".7"/><path d="M2 2h3v3H2z" fill="#eee"/></svg></button>
            <button class="tool" aria-label="Cap"><svg viewBox="0 0 20 20"><use href="#cube"/><path d="M7 5v11" stroke="#1c338d" stroke-dasharray="2 1"/></svg></button>
            <button class="tool" aria-label="Puzzle"><svg viewBox="0 0 20 20"><path d="M2 3l3 1 3-2 1 2-1 3 2 2-2 2-2-1-3 2-1-3 1-2-2-2z" fill="#3659c8"/><path d="M10 9l3 1 3-2 1 3-1 2 3 3-2 2-3-1-3 2-1-3 1-2-2-2z" fill="#6b8cf0"/></svg></button>
            <button class="tool" aria-label="Fillet edge"><svg viewBox="0 0 20 20"><path d="M2 8l6-3 7 2v7l-5 4-8-2z" fill="url(#blue)"/><path d="M9 4l5-3h5l-2 4-4 1z" fill="#ddd" stroke="#555" stroke-width=".7"/></svg></button>
            <button class="tool" aria-label="Box edge"><svg><use href="#cube"/></svg></button>
            <button class="tool" aria-label="Chamfer"><svg viewBox="0 0 20 20"><use href="#cube"/><path d="M3 6l6 10 8-11" fill="#3652bb" opacity=".7"/></svg></button>
            <button class="tool" aria-label="Wire cut"><svg viewBox="0 0 20 20"><use href="#cube"/><path d="M1 12q9-6 18 0" fill="none" stroke="#fff" stroke-width="2"/></svg></button>
            <button class="tool" aria-label="Move face"><svg viewBox="0 0 20 20"><path d="M2 4l10-2v14L2 18z" fill="#fff"/><path d="M5 7l4-1v7l-4 1z" fill="#4666d5"/><path d="M10 11h8M16 8l3 3-3 3" stroke="#fff" fill="none"/></svg></button>
            <button class="tool" aria-label="Extrude face"><svg viewBox="0 0 20 20"><path d="M2 4l7-2v14l-7 2z" fill="#eee"/><path d="M4 7l3-1v7l-3 1z" fill="#333"/><path d="M8 9l4-1v5l-4 1z" fill="#8fa8fa"/><path d="M13 6l5-2v12l-5 2z" fill="#2a448f"/></svg></button>
            <button class="tool" aria-label="Move edge"><svg viewBox="0 0 20 20"><path d="M2 5l6-3 4 2v11l-5 3-5-2z" fill="#708ceb"/><path d="M7 7l5-3 6 2v9l-5 3-6-2zM7 7l6 2v9M13 9l5-3" fill="none" stroke="#eee"/></svg></button>
            <button class="tool" aria-label="Split face"><svg viewBox="0 0 20 20"><path d="M2 6l6-3 10 1v11l-8 3-8-2z" fill="#bbb"/><path d="M2 6l5 1v11l-5-2z" fill="#526fd7"/><path d="M8 11h8M11 8v6" stroke="#333"/></svg></button>
            <button class="tool" aria-label="Solid points"><svg viewBox="0 0 20 20"><use href="#cube"/><path d="M2 4h2v2H2zM9 2h2v2H9zM16 4h2v2h-2zM2 14h2v2H2zM11 17h2v2h-2zM16 13h2v2h-2z" fill="#eee"/></svg></button>
            <button class="tool" aria-label="Fold face"><svg viewBox="0 0 20 20"><use href="#cube"/><path d="M8 3v15M8 11h10M15 9l3 2-3 2" fill="none" stroke="#eee" stroke-width="1.500"/></svg></button>
            <button class="tool" aria-label="Cut edge"><svg viewBox="0 0 20 20"><path d="M4 7l6-4 8 2v9l-4 3z" fill="url(#blue)"/><path d="M1 5l17 11" stroke="#fff" stroke-width="2"/></svg></button>
            <button class="tool" aria-label="Merge faces"><svg viewBox="0 0 20 20"><path d="M1 12l5-3 5 2v5l-5 2-5-2z" fill="#ddd"/><path d="M9 10l5-3 5 2v5l-5 3-5-2z" fill="#6480df"/><path d="M4 7q6-6 11-3" fill="none" stroke="#ccc" stroke-width="1.500"/></svg></button>
            <button class="tool" aria-label="Grid face"><svg viewBox="0 0 20 20"><path d="M1 1h18v18H1z" fill="#5b79de"/><path d="M5 1v18M15 1v18M1 5h18M1 15h18" stroke="#c4d0fa" stroke-width=".7"/><path d="M5 5h10v10H5z" fill="#88a0f2" stroke="#fff" stroke-width="1.500"/></svg></button>
            <button class="tool" aria-label="Round hole"><svg viewBox="0 0 20 20"><use href="#slab"/><ellipse cx="10" cy="10" rx="3.500" ry="2.500" fill="#243371"/></svg></button>
            <button class="tool" aria-label="Place hole"><svg viewBox="0 0 20 20"><path d="M7 4l11 2v11L7 15z" fill="#5876db"/><path d="M1 5l12 2v8L1 13z" fill="#eee"/><path d="M4 8l6 1v3l-6-1z" fill="#4462c5"/></svg></button>
            <button class="tool" aria-label="Revolved hole"><svg viewBox="0 0 20 20"><path d="M3 4l6-2 8 2v12l-6 3-5-2V6z" fill="url(#blue)"/><path d="M8 5v13M12 7l5-3" stroke="#eee"/></svg></button>
            <button class="tool" aria-label="Move hole"><svg viewBox="0 0 20 20"><use href="#slab"/><path d="M7 8h5v5H7z" fill="#1a2b70" stroke="#dce4ff" stroke-width=".8"/></svg></button>
            <button class="tool" aria-label="Copy hole"><svg viewBox="0 0 20 20"><use href="#slab"/><path d="M7 8h6v3l-2 3H8z" fill="#1a2b70" stroke="#dce4ff" stroke-width=".8"/></svg></button>
            <button class="tool" aria-label="Polar holes"><svg viewBox="0 0 20 20"><path d="M1 2h18v16H1z" fill="#6c89e8"/><g fill="#1a2655"><circle cx="6" cy="5" r="2"/><circle cx="13" cy="5" r="2"/><circle cx="4" cy="10" r="2"/><circle cx="16" cy="10" r="2"/><circle cx="12" cy="15" r="2"/></g><circle cx="6" cy="15" r="2" fill="#fff"/></svg></button>
            <button class="tool" aria-label="Grid holes"><svg viewBox="0 0 20 20"><path d="M1 1h18v18H1z" fill="#6884e2"/><path d="M3 3h3v3H3zM9 3h3v3H9zM15 3h3v3h-3zM3 9h3v3H3zM9 9h3v3H9zM15 9h3v3h-3zM9 15h3v3H9zM15 15h3v3h-3z" fill="#1a2655"/><path d="M3 15h3v3H3z" fill="#fff"/></svg></button>
            <button class="tool" aria-label="Delete hole"><svg viewBox="0 0 20 20"><use href="#slab"/><path d="M5 5l10 11M15 6L5 15" stroke="#e22020" stroke-width="2.200"/></svg></button>
            <button class="tool" aria-label="Pull"><svg viewBox="0 0 20 20"><path d="M6 2l8 1v8l-8-1z" fill="#86a1f7" stroke="#fff" stroke-width="1.300"/><path d="M5 12h9l-1 6H7z" fill="url(#paper)"/></svg></button>
            <button class="tool fly" aria-label="Mirror"><svg><use href="#split"/></svg></button>
          </div>
        </section>
      </div>

      <nav class="views">
        <button aria-label="Four views"><svg viewBox="0 0 14 12"><path d="M1 1h12v10H1zM7 0v12M0 6h14" fill="none" stroke="#999"/></svg></button>
        <button aria-label="Single view"><svg viewBox="0 0 14 12"><path d="M1 1h12v10H1z" fill="none" stroke="#3b78e0" stroke-dasharray="2 1"/></svg></button>
        <button class="on">Perspective</button><button>Top</button><button>Front</button><button>Right</button><button>Layouts...</button>
      </nav>
    </main>

    <aside class="right">
      <div class="panel-title"><h2>Layers</h2><button class="gear" aria-label="Panel options"><svg><use href="#gear"/></svg></button></div>
      <div class="panel">
        <div class="panel-main">
          <div class="layer-tools">
            <button aria-label="New layer"><svg viewBox="0 0 20 20"><use href="#layers" width="16" height="16"/><circle cx="14" cy="14" r="5" fill="#eee"/><path d="M14 11v6M11 14h6" stroke="#111" stroke-width="1.500"/></svg></button>
            <button aria-label="New sublayer"><svg viewBox="0 0 20 20"><use href="#layers" width="10" height="10"/><path d="M4 9v8h5M4 9h5" stroke="#eee" fill="none"/><path d="M9 8l4 3 5-3v4l-5 4-4-3z" fill="#4667d2" stroke="#eee"/></svg></button>
            <button aria-label="Delete"><svg viewBox="0 0 20 20"><path d="M3 3l14 14M17 2L3 18" stroke="#d81e12" stroke-width="2.200"/></svg></button>
            <button aria-label="Copy layer"><svg viewBox="0 0 20 20"><g fill="#444" stroke="#999" stroke-width="1.500"><circle cx="7" cy="8" r="6"/><path d="M7 7h7l5 3v8H7z"/></g></svg></button>
            <button aria-label="Up"><svg viewBox="0 0 20 20"><path d="M1 15L10 4l9 11z" fill="url(#blue)"/></svg></button>
            <button aria-label="Down"><svg viewBox="0 0 20 20"><path d="M1 5l9 11 9-11z" fill="url(#blue)"/></svg></button>
            <button aria-label="Parent"><svg viewBox="0 0 20 20"><path d="M15 2v16L5 10z" fill="#555" stroke="#999"/></svg></button>
            <button aria-label="Filter layers"><svg viewBox="0 0 20 20"><path d="M2 2h16l-6 8v9H9v-9z" fill="url(#blue)"/></svg></button>
            <button aria-label="Grid view"><svg viewBox="0 0 20 20"><path d="M2 2h4v4H2zM8 2h4v4H8zM14 2h4v4h-4zM2 8h4v4H2zM8 8h4v4H8zM14 8h4v4h-4zM2 14h4v4H2zM8 14h4v4H8zM14 14h4v4h-4z" fill="#ddd"/></svg></button>
            <button aria-label="List view"><svg viewBox="0 0 20 20"><path d="M2 3h16M2 10h16M2 17h16" stroke="#ddd" stroke-width="2.500"/></svg></button>
            <button aria-label="Layer help"><svg><use href="#help"/></svg></button>
          </div>
          <label class="search"><svg viewBox="0 0 12 12"><circle cx="5" cy="5" r="3.800" fill="none" stroke="#ddd" stroke-width="1.300"/><path d="M8 8l3.500 3.500" stroke="#ddd" stroke-width="1.500"/></svg><input type="text" placeholder="Search" aria-label="Search layers"></label>
          <div class="layer-list">
            <table>
              <colgroup><col><col class="ic"><col class="ic"><col class="ic"><col class="sw"></colgroup>
              <thead><tr><th>Layer</th><th></th><th></th><th></th><th></th></tr></thead>
              <tbody>
                <tr class="cur"><td>Default</td><td><svg viewBox="0 0 12 10"><path d="M1 6l3 3 7-8" fill="none" stroke="#ddd" stroke-width="1.500"/></svg></td><td></td><td></td><td><i class="chip black"></i></td></tr>
                <tr class="sel"><td>Layer 01</td><td></td><td><svg><use href="#bulb"/></svg></td><td><svg><use href="#unlock"/></svg></td><td><i class="chip red"></i></td></tr>
                <tr><td>Layer 02</td><td></td><td><svg><use href="#bulb"/></svg></td><td><svg><use href="#unlock"/></svg></td><td><i class="chip purple"></i></td></tr>
                <tr><td>Layer 03</td><td></td><td><svg><use href="#bulb"/></svg></td><td><svg><use href="#unlock"/></svg></td><td><i class="chip blue"></i></td></tr>
                <tr><td>Layer 04</td><td></td><td><svg><use href="#bulb"/></svg></td><td><svg><use href="#unlock"/></svg></td><td><i class="chip green"></i></td></tr>
                <tr><td>Layer 05</td><td></td><td><svg><use href="#bulb"/></svg></td><td><svg><use href="#unlock"/></svg></td><td><i class="chip white"></i></td></tr>
              </tbody>
            </table>
          </div>
        </div>
        <nav class="side-tabs">
          <button aria-label="Properties"><span class="wheel"></span></button>
          <button class="on" aria-label="Layers"><svg><use href="#layers"/></svg></button>
          <button aria-label="Display"><svg viewBox="0 0 20 20"><path d="M2 3h16v11H2z" fill="url(#paper)"/><path d="M5 16h10" stroke="#aaa" stroke-width="1.500"/></svg></button>
          <button aria-label="Help"><svg viewBox="0 0 20 20"><path d="M1 2h18v16H1z" fill="#dfe6ff"/><path d="M1 2h18v4H1z" fill="#4b70d8"/><circle cx="10" cy="11" r="6.500" fill="#3c5fcb"/><path d="M8 10q0-2 2-2t2 1.500-2 2.500v1M10 14v1.500" stroke="#fff" stroke-width="1.500" fill="none"/></svg></button>
        </nav>
      </div>
    </aside>
  </div>

  <section class="history">
    <span class="vlabel">Command...</span>
    <div class="log">
      <p>1 closed polysurface added to selection.</p>
      <p>1 closed polysurface added to selection.</p>
      <p>3 polysurfaces added to selection.</p>
      <p>Command: _Export</p>
      <p>File successfully saved as /Users/auvan/Desktop/FabAcademy/WK12 Documentation/Automata 3D Model/Prototype Dragon Base.stp.</p>
      <p>1 closed polysurface added to selection.</p>
    </div>
  </section>

  <footer class="status">
    <button aria-label="Left panel"><svg viewBox="0 0 11 11"><path d="M1 1h9v9H1z" fill="none" stroke="#ddd" stroke-width="1.500"/><path d="M1 1h4v9H1z" fill="#ddd"/></svg></button>
    <button aria-label="List"><svg viewBox="0 0 11 11"><path d="M3 2h8M3 5.500h8M3 9h8M0 2h1.500M0 5.500h1.500M0 9h1.500" stroke="#999"/></svg></button>
    <button class="cplane">CPlane</button>
    <span class="cx">x -335.385</span><span class="cy">y -48.658</span><span class="cz">z 0</span>
    <button class="units">Millimeters</button>
    <button class="layer"><i></i>Default</button>
    <button class="opt">Grid Snap</button><button class="opt">Ortho</button><button class="opt">Planar</button>
    <button class="opt on">Osnap</button><button class="opt on">SmartTrack</button><button class="opt on">Gumball (CPlane)</button>
    <button class="auto"><svg viewBox="0 0 9 11"><path d="M2.500 5V3a2 2 0 0 1 4 0v2" fill="none" stroke="#888"/><path d="M1 5h7v5.500H1z" fill="#ddd"/></svg>Auto CPlane (Object)</button>
    <button class="opt rec">Record History</button><button class="opt on">Filter</button>
    <span class="minutes">Minutes from last save: :</span>
    <button class="end" aria-label="Right panel"><svg viewBox="0 0 11 11"><path d="M1 1h9v9H1z" fill="#ccc"/><path d="M3.500 2.500h4v6h-4z" fill="#333"/></svg></button>
  </footer>
</div>
</body>
</html>
```
FILE: styles.css
```css
* { box-sizing: border-box; }
body { margin: 0; background: #0b0f1a; font-family: Inter, "Liberation Sans", sans-serif; font-size: 9px; font-weight: 500; color: #d8d8d8; }
button { border: 0; padding: 0; background: none; color: inherit; font: inherit; display: flex; align-items: center; justify-content: center; }
h1, h2, p { margin: 0; font: inherit; }
svg { display: block; flex: none; }
.defs { position: absolute; width: 0; height: 0; }
.window { min-height: 100vh; display: flex; flex-direction: column; background: #404040; border-radius: 8px 8px 0 0; border-top: 1px solid #6c6866; overflow: hidden; }

.titlebar { height: 23px; background: #403838; display: grid; grid-template-columns: 1fr auto 1fr; align-items: center; }
.lights { display: flex; gap: 6px; padding-left: 6px; }
.light { width: 10px; height: 10px; border-radius: 50%; }
.close { background: radial-gradient(#7a1a16 0 2px, #f0625a 2px); }
.mini { background: #f4bd4f; }
.full { background: #5ec454; }
.doc { font-size: 11px; line-height: 14px; padding-bottom: 2px; color: #8f8886; }
.doc b { color: #d4cfce; }

.ribbon { display: grid; grid-template-columns: 14px 1fr; padding-right: 2px; background: #303030; }
.grip-v { grid-row: 1 / 3; align-self: center; justify-self: end; margin-right: 4px; width: 3px; height: 18px; background: radial-gradient(circle, #666 1px, transparent 1px) 0 0 / 3px 5px; }
.tabs { display: flex; height: 16px; background: #424242; }
.tab { padding: 0 8px; color: #8b8b8b; }
.tab.on { padding: 0 7px; background: #303030; color: #eee; font-weight: 700; }
.gear { width: 12px; height: 12px; }
.gear svg { width: 12px; height: 12px; }
.tabs .gear { margin: 1px 3px 0 auto; }
.toolbar { display: flex; width: 778px; max-width: 100%; height: 24px; margin-left: -1px; }
.toolbar .tool { flex: 1 1 0; min-width: 0; height: 22px; }
.tool { position: relative; height: 23px; }
.tool svg { width: 18px; height: 18px; }
.fly::after { content: ""; position: absolute; right: 0; bottom: 1px; border: 2px solid transparent; border-right-color: #b5b5b5; border-bottom-color: #b5b5b5; }
.wheel { width: 16px; height: 16px; border-radius: 50%; background: radial-gradient(circle, #303030 0 4px, transparent 4px), conic-gradient(#f0e020, #f07020, #f02060, #d020e0, #3040f0, #20c0f0, #20d040, #f0e020); }

.work { flex: 1; display: flex; min-height: 518px; }
.left { width: 108px; flex: none; display: flex; flex-direction: column; background: #303030; border-right: 3px solid #3d3d3d; border-left: 2px solid #3a3a3a; }
.grip-h { align-self: center; width: 20px; height: 3px; margin-top: 4px; background: radial-gradient(circle, #777 1px, transparent 1px) 0 0 / 5px 3px; }
.command { margin: 12px 7px 0; height: 17px; padding: 0 2px; border: 0; border-bottom: 1px solid #5c5c5c; background: #383838; color: #ddd; font: 500 10px Inter, sans-serif; }
::placeholder { color: #747474; opacity: 1; }
.tools { display: grid; grid-template-columns: repeat(4, 23px); margin: 10px 0 7px 3px; }
.wire { fill: none; stroke: #c8c8c8; stroke-width: 1.2; }
.wire .n { fill: #303030; stroke: #e2e2e2; stroke-width: 1; }
.panel-title { display: flex; align-items: center; justify-content: space-between; height: 16px; padding: 0 2px 0 1px; color: #9a9a9a; font-size: 10px; background: #383838; }
.minitabs { display: flex; height: 17px; background: #404040; }
.minitabs button { width: 30px; }
.minitabs .on { background: #303030; }
.minitabs svg { width: 15px; height: 15px; }
.more { margin: 0 2px 0 auto; height: 14px; padding-bottom: 2px; font-size: 13px; line-height: 12px; }
.checks { padding-top: 1px; }
.checks label { display: flex; align-items: center; gap: 3px; height: 14px; padding-left: 2px; color: #e6e6e6; }
.checks input { appearance: none; flex: none; margin: 0; width: 10px; height: 10px; border-radius: 2px; background: #555; display: grid; place-items: center; }
.checks input:checked { background: #1f66e0; }
.checks input:checked::after { content: ""; width: 4px; height: 7px; margin-bottom: 2px; border: solid #fff; border-width: 0 2px 2px 0; transform: rotate(40deg); }

.center { flex: 1; min-width: 0; display: flex; flex-direction: column; }
.viewport { position: relative; flex: 1; display: grid; background: #9ea4ad; overflow: hidden; }
.scene { width: 100%; height: 100%; min-height: 0; }
.grid { stroke: #8a929c; stroke-width: .5; fill: none; }
.thin { fill: none; stroke: #333; stroke-width: .8; }
.edge { stroke: #111; stroke-width: .8; stroke-linejoin: round; }
.axis path { fill: none; stroke: #7b8189; }
.axis text { font: 10px Inter, sans-serif; fill: #62676e; }
.vtitle { position: absolute; left: 0; top: 1px; display: flex; gap: 1px; }
.vtitle button { height: 15px; padding: 0 3px; background: #1c5496; color: #fff; font-size: 10px; font-weight: 600; }
.vtitle .drop { padding: 0 1px; }
.vtitle svg { width: 10px; height: 10px; }
.palette { position: absolute; left: 8px; top: 21px; padding: 0 3px 4px; border-radius: 5px; background: #303030; border: 1px solid #686868; box-shadow: 0 2px 6px rgba(0, 0, 0, .5); }
.palette header { display: flex; height: 20px; margin: 0 -3px; background: #444; border-radius: 5px 5px 0 0; align-items: flex-end; }
.dot { width: 8px; height: 8px; margin: 0 11px 7px 3px; border-radius: 50%; background: #5d5d5d; }
.palette h2 { display: flex; align-items: center; gap: 4px; height: 18px; padding: 2px 7px 0 5px; background: #303030; color: #e2e2e2; font-size: 9px; }
.palette h2 svg { width: 13px; height: 13px; }
.solids { display: grid; grid-template-columns: repeat(6, 23px); }
.views { display: flex; align-items: center; height: 22px; padding: 0 0 3px 7px; font-size: 10px; color: #aaa; background: #414141; }
.views svg { width: 14px; height: 12px; }
.views button + button { margin-left: 12px; }
.views button:nth-child(n + 3) { margin-left: 16px; padding-left: 16px; border-left: 1px solid #777; height: 11px; }
.views .on:nth-child(3) { margin-left: 11px; color: #3d84ee; }

.right { width: 192px; flex: none; display: flex; flex-direction: column; padding: 0 2px 3px; background: #404040; }
.right .panel-title { height: 16px; padding-left: 0; background: none; }
.panel { flex: 1; display: flex; background: #303030; }
.panel-main { flex: 1; min-width: 0; display: flex; flex-direction: column; padding: 7px 8px 6px 6px; }
.layer-tools { display: grid; grid-template-columns: repeat(8, 18px); grid-auto-rows: 18px; }
.layer-tools svg { width: 13px; height: 13px; }
.search { display: flex; align-items: center; gap: 5px; height: 17px; margin-top: 5px; padding: 0 5px; border-radius: 3px; background: #3d3d3d; }
.search svg { width: 12px; height: 12px; }
.search input { min-width: 0; flex: 1; border: 0; padding: 0; background: none; color: #ddd; font: 500 10px Inter, sans-serif; }
.layer-list { flex: 1; margin-top: 4px; background: #1e1e1e; }
table { width: 100%; border-collapse: collapse; table-layout: fixed; color: #e8e8e8; }
.ic { width: 17px; }
.sw { width: 4px; }
th, td { padding: 0; height: 16px; line-height: 14px; text-align: left; font-weight: 600; vertical-align: middle; }
th:first-child, td:first-child { padding-left: 22px; }
thead th { height: 25px; background: linear-gradient(#3c3c3c, #3c3c3c) 0 50% / 1px 13px no-repeat; }
thead th:first-child { background: none; font-weight: 700; }
thead tr { border-bottom: 2px solid #333; }
.cur td { font-weight: 700; }
.sel { background: #404040; }
tbody tr + tr { border-top: 1px solid #2c2c2c; }
td svg { width: 10px; height: 11px; margin: 0 auto; }
.cur td svg { width: 13px; }
.chip { display: block; width: 4px; height: 11px; border: 1px solid #eee; border-right: 0; }
.black { background: #000; } .red { background: #d01818; } .purple { background: #6524c0; } .blue { background: #0018e8; } .green { background: #1a721a; } .white { background: #fff; }
.side-tabs { width: 18px; padding-top: 1px; background: #404040; display: flex; flex-direction: column; align-items: stretch; }
.side-tabs button { height: 29px; }
.side-tabs .on { background: #303030; }
.side-tabs svg { width: 12px; height: 12px; }
.side-tabs .wheel { width: 11px; height: 11px; align-self: center; background: radial-gradient(circle, #404040 0 3px, transparent 3px), conic-gradient(#f0e020, #f07020, #f02060, #d020e0, #3040f0, #20c0f0, #20d040, #f0e020); }

.history { display: flex; margin: 2px 2px 0 2px; min-height: 68px; background: #1e1e1e; }
.vlabel { width: 15px; background: #383838; color: #8f8f8f; font-size: 10px; line-height: 15px; text-align: center; writing-mode: vertical-rl; transform: rotate(180deg); }
.log { padding-left: 6px; font: 400 10px "Liberation Sans", sans-serif; color: #f0f0f0; -webkit-text-stroke: 0.3px #f0f0f0; }
.log p { line-height: 11px; }

.status { display: flex; align-items: center; height: 19px; padding: 1px 7px 0; background: #343434; color: #b4b4b4; white-space: nowrap; }
.status svg { width: 11px; height: 11px; }
.status > button + button { margin-left: 5px; }
.status .cplane { margin: 0 22px 0 15px; }
.cx { width: 62px; } .cy { width: 73px; } .cz { width: 52px; }
.status .layer { gap: 5px; margin: 0 40px 0 21px; }
.layer i { width: 13px; height: 13px; background: #000; border: 1px solid #ccc; }
.status .opt { margin: 0 3px 0 0; padding: 0 7px; height: 16px; }
.status .opt.on { background: #202020; color: #eee; font-weight: 700; padding: 0 6px; }
.status .auto { gap: 7px; margin: 0 14px 0 8px; }
.minutes { margin-left: 9px; }
.status .end { margin-left: auto; }
```
